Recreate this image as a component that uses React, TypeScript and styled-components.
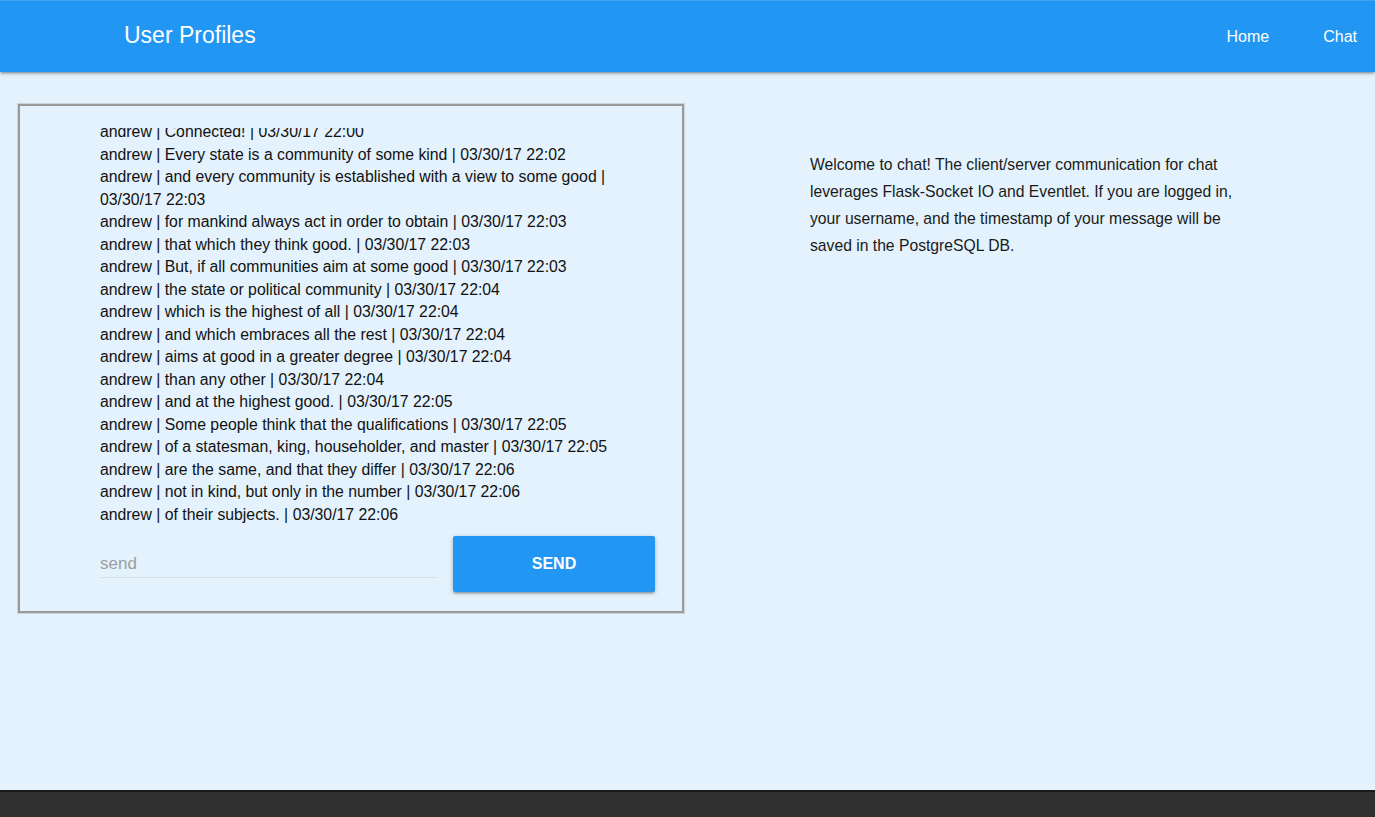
import React from 'react';
import styled, { createGlobalStyle } from 'styled-components';

const GlobalStyle = createGlobalStyle`
  html, body {
    margin: 0;
    padding: 0;
    background: #e3f2fd;
    font-family: "Liberation Sans", Arial, Helvetica, sans-serif;
    overflow: hidden;
  }
  * {
    box-sizing: border-box;
  }
`;

const Page = styled.div`
  display: flex;
  flex-direction: column;
  min-height: 817px;
`;

const NavBar = styled.nav`
  height: 72px;
  background-color: #2196f3;
  border-top: 1px solid #3fa3f5;
  box-shadow: 0 2px 2px 0 rgba(0, 0, 0, 0.14), 0 3px 1px -2px rgba(0, 0, 0, 0.12),
    0 1px 5px 0 rgba(0, 0, 0, 0.2);
  display: flex;
  align-items: center;
  justify-content: space-between;
  padding: 0 18px 0 124px;
  position: relative;
  z-index: 2;
`;

const Brand = styled.a`
  color: #fff;
  font-size: 23px;
  text-decoration: none;
  margin-top: -2px;
`;

const NavLinks = styled.ul`
  list-style: none;
  display: flex;
  gap: 54px;
  margin: 0;
  padding: 0;

  a {
    color: #fff;
    font-size: 16px;
    text-decoration: none;
  }
`;

const Main = styled.main`
  height: 718px;
  display: grid;
  grid-template-columns: 687px 1fr;
  padding-top: 32px;
`;

const ChatCard = styled.section`
  margin-left: 18px;
  width: 666px;
  height: 509px;
  border: 2px solid #9a9a9a;
  box-shadow: 0 0 0 1px #c9d4dc;
  padding: 22px 27px 0 80px;
  display: flex;
  flex-direction: column;
`;

const MessageList = styled.ul`
  list-style: none;
  margin: 0;
  padding: 0;
  height: 398px;
  overflow: hidden;
  display: flex;
  flex-direction: column;
  justify-content: flex-end;
`;

const Message = styled.li`
  flex-shrink: 0;
  font-size: 15.8px;
  line-height: 22.5px;
  color: #111;
`;

const SendRow = styled.form`
  display: flex;
  align-items: flex-start;
  gap: 16px;
  margin-top: 10px;
`;

const SendInput = styled.input`
  width: 337px;
  height: 42px;
  border: none;
  border-bottom: 1px solid #d6dde2;
  background: transparent;
  font-family: inherit;
  font-size: 17px;
  padding: 14px 0 0;
  outline: none;
  color: #222;

  &::placeholder {
    color: #9e9e9e;
  }
`;

const SendButton = styled.button`
  width: 202px;
  height: 56px;
  border: none;
  border-radius: 2px;
  background-color: #2196f3;
  color: #fff;
  font-family: inherit;
  font-size: 16px;
  font-weight: bold;
  text-transform: uppercase;
  box-shadow: 0 2px 2px 0 rgba(0, 0, 0, 0.14), 0 3px 1px -2px rgba(0, 0, 0, 0.12),
    0 1px 5px 0 rgba(0, 0, 0, 0.2);
  cursor: pointer;
`;

const InfoColumn = styled.aside`
  padding: 47px 0 0 123px;
`;

const InfoText = styled.p`
  margin: 0;
  width: 440px;
  font-size: 15.7px;
  line-height: 27px;
  color: #1a1a1a;
`;

const Footer = styled.footer`
  height: 27px;
  background-color: #303030;
  border-top: 2px solid #1a1a1a;
`;

const messages = [
  ['Connected!', '03/30/17 22:00'],
  ['Every state is a community of some kind', '03/30/17 22:02'],
  ['and every community is established with a view to some good', '03/30/17 22:03'],
  ['for mankind always act in order to obtain', '03/30/17 22:03'],
  ['that which they think good.', '03/30/17 22:03'],
  ['But, if all communities aim at some good', '03/30/17 22:03'],
  ['the state or political community', '03/30/17 22:04'],
  ['which is the highest of all', '03/30/17 22:04'],
  ['and which embraces all the rest', '03/30/17 22:04'],
  ['aims at good in a greater degree', '03/30/17 22:04'],
  ['than any other', '03/30/17 22:04'],
  ['and at the highest good.', '03/30/17 22:05'],
  ['Some people think that the qualifications', '03/30/17 22:05'],
  ['of a statesman, king, householder, and master', '03/30/17 22:05'],
  ['are the same, and that they differ', '03/30/17 22:06'],
  ['not in kind, but only in the number', '03/30/17 22:06'],
  ['of their subjects.', '03/30/17 22:06'],
];

export default function App() {
  return (
    <Page>
      <GlobalStyle />
      <NavBar>
        <Brand href="#">User Profiles</Brand>
        <NavLinks>
          <li>
            <a href="#">Home</a>
          </li>
          <li>
            <a href="#">Chat</a>
          </li>
        </NavLinks>
      </NavBar>
      <Main>
        <div>
          <ChatCard>
            <MessageList>
              {messages.map(([text, time], index) => (
                <Message key={index}>
                  andrew | {text} | {time}
                </Message>
              ))}
            </MessageList>
            <SendRow onSubmit={(e) => e.preventDefault()}>
              <SendInput placeholder="send" />
              <SendButton type="submit">Send</SendButton>
            </SendRow>
          </ChatCard>
        </div>
        <InfoColumn>
          <InfoText>
            Welcome to chat! The client/server communication for chat leverages Flask-Socket IO
            and Eventlet. If you are logged in, your username, and the timestamp of your message
            will be saved in the PostgreSQL DB.
          </InfoText>
        </InfoColumn>
      </Main>
      <Footer />
    </Page>
  );
}
